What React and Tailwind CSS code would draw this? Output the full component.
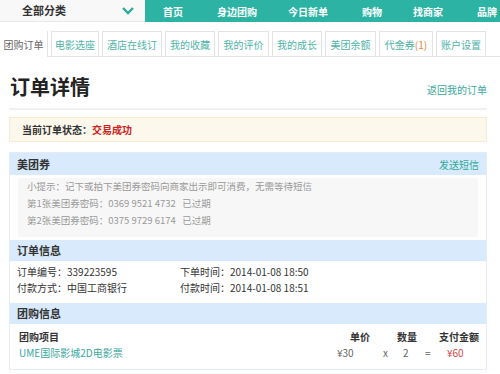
import React from "react";

const F = { fontFamily: '"Noto Sans CJK SC", "Noto Sans", sans-serif' };

export default function App() {
  const tabs = [
    ["团购订单", "w-[48px]", true],
    ["电影选座", "w-[48px]"],
    ["酒店在线订", "w-[60px]"],
    ["我的收藏", "w-[50px]"],
    ["我的评价", "w-[51px]"],
    ["我的成长", "w-[50px]"],
    ["美团余额", "w-[51px]"],
    ["代金券", "w-[54px]", false, true],
    ["账户设置", "w-[50px]"],
  ];
  return (
    <div style={F} className="w-[500px] h-[374px] overflow-hidden bg-white text-[11px] text-[#333]">
      {/* top bar */}
      <div className="flex h-[22px]">
        <div className="w-[145px] bg-[#f8f8f8] flex items-center pl-[22px] pr-[10px] justify-between border-b border-[#e8e8e8]">
          <span className="font-bold text-[11px] text-[#333]">全部分类</span>
          <svg width="14" height="9" viewBox="0 0 14 9">
            <path d="M2 2 L7 7 L12 2" stroke="#2bab9c" strokeWidth="2.4" fill="none" />
          </svg>
        </div>
        <div className="flex-1 bg-[#2db3a4] flex items-center text-white text-[10px] font-bold whitespace-nowrap">
          <span className="ml-[18px]">首页</span>
          <span className="ml-[34px]">身边团购</span>
          <span className="ml-[31px]">今日新单</span>
          <span className="ml-[34px]">购物</span>
          <span className="ml-[31px]">找商家</span>
          <span className="ml-[34px]">品牌</span>
        </div>
      </div>
      {/* tabs */}
      <div className="flex items-end mt-[9px] h-[26px] border-b border-[#e3e3e3] gap-[3px]">
        {tabs.map(([t, w, active, badge], i) => (
          <div
            key={i}
            className={`${w} h-[25px] flex items-center justify-center text-[10px] whitespace-nowrap ${
              active
                ? "bg-white text-[#666] border-r border-[#e3e3e3] h-[26px] -mb-px"
                : "border border-b-0 border-[#e3e3e3] text-[#4fb3a8]"
            }`}
          >
            {t}
            {badge && <span className="text-[#e0863a]">(1)</span>}
          </div>
        ))}
      </div>
      {/* title */}
      <div className="flex items-end justify-between ml-[9px] mr-[13px] pt-[17px] pb-[8px] border-b-2 border-[#eef0f4]">
        <span className="text-[20px] font-bold text-[#222] leading-[26px] ml-[1px]">订单详情</span>
        <span className="text-[10px] text-[#3aa89c] mb-[3px]">返回我的订单</span>
      </div>
      {/* status */}
      <div className="ml-[9px] mr-[13px] mt-[7px] h-[25px] bg-[#fdf8ec] border border-[#f6ecd4] flex items-center pl-[12px] text-[10px]">
        <span className="font-bold text-[#333]">当前订单状态：</span>
        <span className="font-bold text-[#cc2222]">交易成功</span>
      </div>
      {/* sections */}
      <div className="ml-[9px] mr-[13px] mt-[10px] border border-[#e1ecf7]">
        <div className="h-[22px] bg-[#d8eafb] flex items-center justify-between px-[7px]">
          <span className="text-[11px] font-bold text-[#333]">美团券</span>
          <span className="text-[10px] text-[#2ea898]">发送短信</span>
        </div>
        <div className="px-[8px] pt-[3px] pb-[3px]">
          <div className="bg-[#f7f7f7] h-[59px] pl-[9px] pt-[0px] text-[9.5px] text-[#999] leading-[17px]">
            <div>小提示：记下或拍下美团券密码向商家出示即可消费，无需等待短信</div>
            <div>第1张美团券密码：0369 9521 4732&nbsp;&nbsp;&nbsp;已过期</div>
            <div>第2张美团券密码：0375 9729 6174&nbsp;&nbsp;&nbsp;已过期</div>
          </div>
        </div>
        <div className="h-[21px] bg-[#d8eafb] flex items-center px-[7px]">
          <span className="text-[11px] font-bold text-[#333]">订单信息</span>
        </div>
        <div className="px-[7px] pt-[3px] pb-[7px] text-[10px] text-[#333] leading-[16px]">
          <div className="flex">
            <span className="w-[163px]">订单编号：339223595</span>
            <span>下单时间：2014-01-08 18:50</span>
          </div>
          <div className="flex">
            <span className="w-[163px]">付款方式：中国工商银行</span>
            <span>付款时间：2014-01-08 18:51</span>
          </div>
        </div>
        <div className="h-[21px] bg-[#d8eafb] flex items-center px-[7px]">
          <span className="text-[11px] font-bold text-[#333]">团购信息</span>
        </div>
        <div className="px-[9px] pt-[5px] pb-[8px] text-[10px] leading-[16px]">
          <div className="flex font-bold text-[#333]">
            <span className="flex-1">团购项目</span>
            <span className="w-[20px] mr-[27px]">单价</span>
            <span className="w-[20px] mr-[22px]">数量</span>
            <span className="w-[40px] mr-[-2px]">支付金额</span>
          </div>
          <div className="flex text-[#666]">
            <span className="flex-1 text-[#3aa89c]">UME国际影城2D电影票</span>
            <span className="w-[20px] mr-[26px]">¥30</span>
            <span className="w-[8px] mr-[12px]">x</span>
            <span className="w-[8px] mr-[14px]">2</span>
            <span className="w-[8px] mr-[14px]">=</span>
            <span className="w-[30px] text-[#d04848]">¥60</span>
          </div>
        </div>
      </div>
    </div>
  );
}
